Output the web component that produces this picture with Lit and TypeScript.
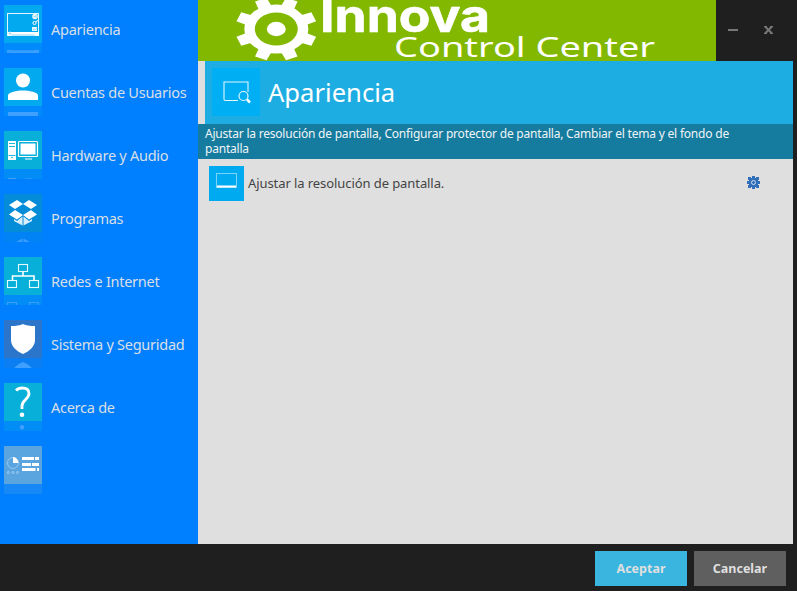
import { LitElement, html, svg, css } from "lit";
import { customElement } from "lit/decorators.js";
import { classMap } from "lit/directives/class-map.js";

const gearPath = (cx: number, cy: number, rx: number, ry: number, inner: number, half: number, teeth: number, start: number) => {
  const pts: string[] = [];
  const step = (Math.PI * 2) / teeth;
  const at = (a: number, k: number) => `${(cx + Math.cos(a) * rx * k).toFixed(2)} ${(cy + Math.sin(a) * ry * k).toFixed(2)}`;
  for (let i = 0; i < teeth; i++) {
    const a = start + i * step;
    pts.push(at(a - half * 1.25, inner), at(a - half * 0.85, 1), at(a + half * 0.85, 1), at(a + half * 1.25, inner));
  }
  return `M${pts.join("L")}Z`;
};

const icons: Record<string, unknown> = {
  display: svg`<rect x="3.500" y="8.500" width="31" height="22" fill="none" stroke="#e4f6fd"/><path d="M4 27h31v3.500H4z" fill="#fff"/><circle cx="6" cy="28.500" r="1.500" fill="#9adcf8" stroke="#fff" stroke-width=".6"/><path d="M7.500 30h23" stroke="#8fd8f7"/><circle cx="31" cy="11.500" r="2.800" fill="#e8f8ff"/><path d="M29.500 11.500h2M32 10v3" stroke="#63c9f4" stroke-width=".6"/><circle cx="30.500" cy="18" r="1.600" fill="none" stroke="#fff"/><path d="M32 16.500l2-1" stroke="#fff"/><path d="M28 22h5v4h-5z" fill="#e8f8ff"/><path d="M29 24l2 1 2-2" fill="none" stroke="#63c9f4" stroke-width=".6"/>`,
  user: svg`<circle cx="19" cy="12.500" r="7" fill="#fff"/><path d="M4 32v-4.500C4 24 13 22.500 19 22.500s15 1.500 15 5V32z" fill="#fff"/>`,
  hardware: svg`<path d="M4 10h8v18H4z" fill="#fff"/><path d="M5 12.500h6M5 15.500h6M4.500 24.500h7" stroke="#08afd9" stroke-width=".9"/><circle cx="8" cy="26.500" r=".8" fill="#08afd9"/><rect x="14.500" y="10.500" width="19" height="15" rx="1" fill="none" stroke="#fff" stroke-width="1.200"/><path d="M16.500 12.500h15v11h-15z" fill="#fff"/><path d="M21 28h7M4 28.500h8" stroke="#fff"/>`,
  dropbox: svg`<path d="M13 6l6 4-8 5-6-4zM25 6l-6 4 8 5 6-4zM5 20.500l6-4.500 8 5-6 4.500zM33 20.500L27 16l-8 5 6 4.500z" fill="#fff"/><path d="M10 25l3 2 5.500-4.500V31.500L10 27zM28 25l-3 2-5.500-4.500V31.500L28 27z" fill="#d8efff"/>`,
  network: svg`<g fill="none" stroke="#e4faff" stroke-width="1.100"><rect x="14.500" y="7.500" width="9" height="7"/><rect x="3.500" y="23.500" width="9" height="7"/><rect x="25.500" y="23.500" width="9" height="7"/></g><path d="M19 15v4M8.500 23v-4h21.500v4" fill="none" stroke="#fff" stroke-width="1.600"/>`,
  shield: svg`<path d="M19 4c3 1.500 7 2 12 2v14c0 6-5 11-12 14C12 31 7 26 7 20V6c5 0 9-.5 12-2z" fill="#fff"/>`,
  help: svg`<path d="M12 7.500c1.500-1.700 4-2.500 6.300-2.500 4 0 6.700 2 6.700 5.500 0 5.500-7 7-7 12.200V26" fill="none" stroke="#fff" stroke-width="2.800"/><circle cx="18" cy="31.700" r="2.300" fill="#fff"/>`,
  stats: svg`<circle cx="9" cy="17" r="5.500" fill="none" stroke="#b9dcf5" stroke-width=".6"/><path d="M9 17v-6a6 6 0 0 1 5.500 6z" fill="#fff"/><g fill="none" stroke="#b9dcf5" stroke-width=".7"><circle cx="4.300" cy="26.500" r="1"/><circle cx="9" cy="26.500" r="1"/><circle cx="13.500" cy="26.500" r="1"/></g><path d="M18 12.500h12M31 12.500h4M18 18.500h9M28 18.500h7M18 23.500h13.500M33 23.500h2" stroke="#fff" stroke-width="3"/>`,
};

const items = [
  { icon: "display", label: "Apariencia", tone: "sky" },
  { icon: "user", label: "Cuentas de Usuarios", tone: "sky" },
  { icon: "hardware", label: "Hardware y Audio", tone: "teal" },
  { icon: "dropbox", label: "Programas", tone: "deep" },
  { icon: "network", label: "Redes e Internet", tone: "teal" },
  { icon: "shield", label: "Sistema y Seguridad", tone: "navy" },
  { icon: "help", label: "Acerca de", tone: "teal" },
  { icon: "stats", label: "", tone: "pale" },
];

@customElement("side-menu")
export class SideMenu extends LitElement {
  static styles = css`
    :host { display: block; background: #0080ff; padding-top: 5px; box-sizing: border-box; }
    .item { display: flex; height: 63px; padding-left: 4px; gap: 9px; }
    .tile { width: 38px; height: 38px; flex: none; -webkit-box-reflect: below 0 linear-gradient(transparent 28px, rgba(255, 255, 255, 0.25) 28px); }
    .tile svg { display: block; }
    .sky { background: #03a9ee; }
    .teal { background: #08afd9; }
    .deep { background: #058cd8; }
    .navy { background: #2b76cb; }
    .pale { background: #5aa5e0; }
    .label { font-size: 14.500px; letter-spacing: -0.26px; line-height: 20px; margin-top: 14px; color: #d9dfe6; white-space: nowrap; }
  `;
  render() {
    return items.map(
      (i) => html`<div class="item">
        <div class=${classMap({ tile: true, [i.tone]: true })}><svg width="38" height="38" viewBox="0 0 38 38">${icons[i.icon]}</svg></div>
        <span class="label">${i.label}</span>
      </div>`
    );
  }
}

@customElement("app-root")
export class AppRoot extends LitElement {
  static styles = css`
    :host { display: flex; flex-direction: column; width: 797px; height: 591px; background: #1f1f1f; font-family: "Noto Sans", sans-serif; overflow: hidden; }
    .body { display: grid; grid-template-columns: 198px 595px; height: 544px; }
    .main { display: flex; flex-direction: column; background: #dfdfdf; }
    .top { display: flex; height: 61px; background: #1f1f1f; }
    .banner { width: 518px; background: #82b900; }
    .banner svg, .controls svg { display: block; }
    .controls { width: 79px; flex: none; }
    .title { display: flex; align-items: center; gap: 8px; height: 63px; margin-left: 7px; padding: 0 0 1px 7px; box-sizing: border-box; background: #1eade2; color: #fff; font-size: 25.600px; }
    .hero { width: 48px; height: 48px; background: #00aef3; }
    .desc { height: 35px; box-sizing: border-box; padding: 2px 55px 0 7px; background: #157b9f; color: #f0f5f7; font-size: 12px; letter-spacing: -0.21px; line-height: 15px; }
    .row { display: flex; align-items: center; padding: 7px 32px 0 11px; gap: 4px; color: #444; font-size: 13px; letter-spacing: -0.08px; }
    .small { width: 35px; height: 35px; background: #00aaf0; }
    .text { flex: 1; padding-bottom: 2px; }
    .cog { margin-bottom: 2px; }
    .foot { display: flex; justify-content: flex-end; gap: 7px; padding: 7px 11px 0 0; }
    .btn { width: 92px; height: 35px; border: 0; padding: 0; font: bold 12.500px "Noto Sans", sans-serif; color: #dfdfdf; background: #5f5f5f; }
    .primary { background: #39b5e0; }
    .logo { font-family: "Noto Sans", sans-serif; fill: #fff; }
    .heavy { font-family: Inter, sans-serif; font-weight: 700; stroke: #fff; stroke-width: 0.6; }
  `;
  render() {
    return html`
      <div class="body">
        <side-menu></side-menu>
        <div class="main">
          <div class="top">
            <div class="banner">
              <svg width="518" height="61" viewBox="0 0 518 61">
                <path d=${gearPath(78.3, 29, 41, 32.2, 0.74, 0.18, 8, Math.PI / 8)} fill="#fff" />
                <ellipse cx="78.300" cy="29" rx="32" ry="24.500" fill="#fff" />
                <ellipse cx="78.300" cy="29" rx="21.500" ry="16.500" fill="#82b900" />
                <ellipse cx="78.300" cy="29" rx="9.500" ry="7.200" fill="#fff" />
                <text class="logo heavy" x="122" y="31.500" font-size="45" textLength="170" lengthAdjust="spacingAndGlyphs">Innova</text>
                <text class="logo" x="196" y="57" font-size="28" textLength="261" lengthAdjust="spacingAndGlyphs">Control Center</text>
              </svg>
            </div>
            <div class="controls">
              <svg width="79" height="61" viewBox="0 0 79 61" fill="none" stroke="#777"><path d="M12 30h10" stroke-width="2" /><path d="M49 26.500l7 7M56 26.500l-7 7" stroke-width="2" /><path d="M48 26.500h3M54 26.500h3M48 33.500h3M54 33.500h3" /></svg>
            </div>
          </div>
          <div class="title">
            <svg class="hero" viewBox="0 0 48 48" fill="none" stroke="#e3f7ff"><path d="M26 32.500H13.500q-1.500 0-1.500-1.500V14h24v10" stroke-width="1.100" /><circle cx="31.500" cy="28" r="4.500" stroke-width="1.200" /><path d="M35 31.500l3 3" stroke="#fff" stroke-width="2.500" /></svg>
            <span class="heading">Apariencia</span>
          </div>
          <div class="desc">Ajustar la resolución de pantalla, Configurar protector de pantalla, Cambiar el tema y el fondo de pantalla</div>
          <div class="row">
            <svg class="small" viewBox="0 0 35 35"><rect x="7.500" y="7.500" width="20" height="14" fill="none" stroke="#7bd4f8" /><path d="M8 20.500h19" stroke="#fff" stroke-width="2" /></svg>
            <span class="text">Ajustar la resolución de pantalla.</span>
            <svg class="cog" width="15" height="14" viewBox="0 0 15 14"><g fill="#326fba"><path d="M3 2h9v9H3zM6 0h3v13H6zM1 5h13v3H1z" /><path d="M2 1h3v3H2zM10 1h3v3h-3zM2 9h3v3H2zM10 9h3v3h-3z" /></g><circle cx="7.500" cy="6.500" r="2" fill="none" stroke="#cfdbea" /></svg>
          </div>
        </div>
      </div>
      <div class="foot"><button class="btn primary">Aceptar</button><button class="btn">Cancelar</button></div>
    `;
  }
}
